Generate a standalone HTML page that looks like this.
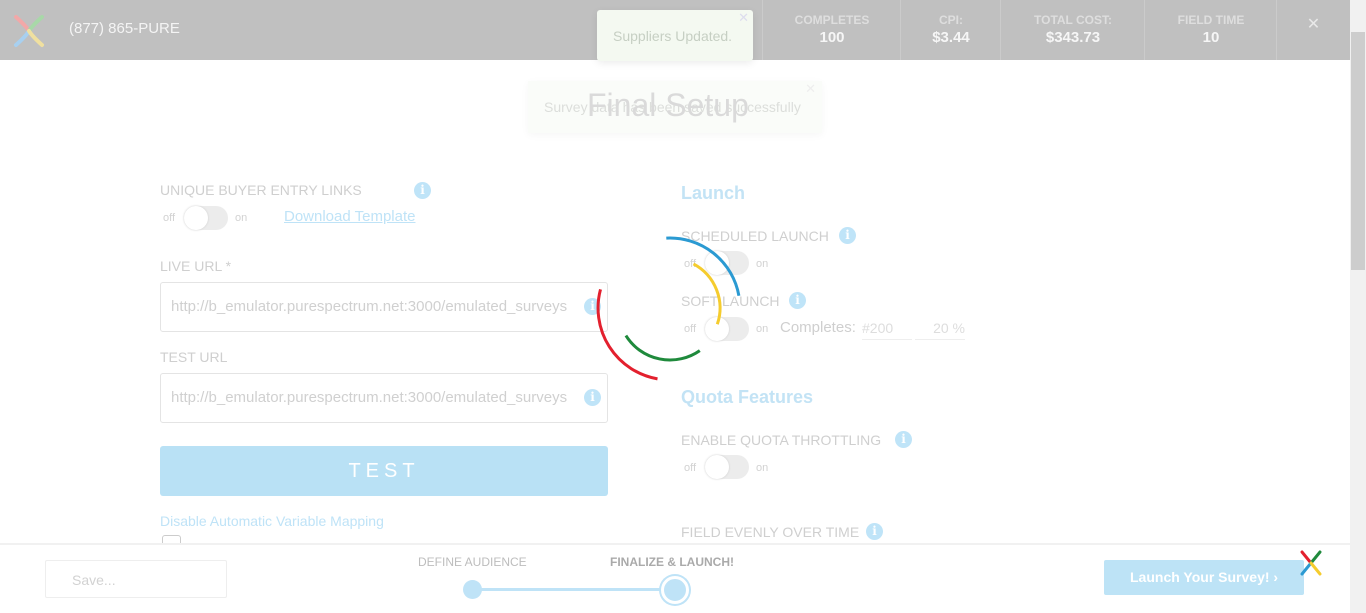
<!DOCTYPE html>
<html><head><meta charset="utf-8">
<style>
*{box-sizing:border-box;margin:0;padding:0}
body{width:1366px;height:613px;overflow:hidden;background:#fff;font-family:"Liberation Sans",sans-serif;position:relative;color:#ccc}
.abs{position:absolute}
.hdr{left:0;top:0;width:1350px;height:60px;background:#c0c0c0}
.phone{left:69px;top:20px;color:#f4f4f4;font-size:15px}
.stat{top:0;height:60px;border-left:1px solid #cbcbcb;text-align:center;color:#e6e6e6;font-weight:bold}
.stat .l{font-size:12px;margin-top:13px;color:#dedede}
.stat .v{font-size:15px;color:#f6f6f6;margin-top:2px}
.lab{font-size:14px;color:#cfcfcf}
.info{width:17px;height:17px;border-radius:50%;background:#bfe4f8;color:#fff;font-size:12px;font-weight:bold;text-align:center;line-height:17px;font-family:"DejaVu Serif",serif}
.tog{width:44px;height:24px;border-radius:12px;background:#ececec}
.tog::after{content:"";position:absolute;left:0;top:0;width:24px;height:24px;border-radius:50%;background:#fff;box-shadow:0 0 2px #ccc}
.sm{font-size:11px;color:#d2d2d2}
.inp{border:1px solid #e4e4e4;border-radius:3px;height:50px;width:448px;font-size:15px;color:#d0d0d0;padding:15px 10px}
.blue{color:#bfe3f7}
.h2{font-size:18px;font-weight:bold;color:#c3e3f5}
</style></head><body>
<div class="abs hdr"></div>
<svg class="abs" style="left:12px;top:14px" width="34" height="34" viewBox="0 0 34 34">
<path d="M4 3 Q14 12 17 17" stroke="#f2a8a8" stroke-width="4" fill="none" stroke-linecap="round"/>
<path d="M30 3 Q20 12 17 17" stroke="#a8d8a8" stroke-width="4" fill="none" stroke-linecap="round"/>
<path d="M4 31 Q14 22 17 17" stroke="#a8d0f0" stroke-width="4" fill="none" stroke-linecap="round"/>
<path d="M30 31 Q20 22 17 17" stroke="#f0e0a0" stroke-width="4" fill="none" stroke-linecap="round"/>
</svg>
<div class="abs phone">(877) 865-PURE</div>
<div class="abs stat" style="left:762px;width:139px"><div class="l">COMPLETES</div><div class="v">100</div></div>
<div class="abs stat" style="left:900px;width:101px"><div class="l">CPI:</div><div class="v">$3.44</div></div>
<div class="abs stat" style="left:1000px;width:145px"><div class="l">TOTAL COST:</div><div class="v">$343.73</div></div>
<div class="abs stat" style="left:1144px;width:133px"><div class="l">FIELD TIME</div><div class="v">10</div></div>
<div class="abs stat" style="left:1276px;width:74px;font-size:16px;padding-top:14px;font-weight:normal;color:#e8e8e8">✕</div>
<div class="abs" style="left:1350px;top:0;width:16px;height:613px;background:#f1f1f1"></div>
<div class="abs" style="left:1351px;top:32px;width:14px;height:238px;background:#cdcdcd"></div>

<div class="abs" style="left:597px;top:10px;width:156px;height:51px;background:#f4f9f1;border-radius:3px;box-shadow:0 2px 8px rgba(0,0,0,.08);color:#c6cfc3;font-size:14px;padding:18px 0 0 16px">Suppliers Updated.<span class="abs" style="right:4px;top:0;font-size:13px;color:#dde">✕</span></div>
<div class="abs" style="left:528px;top:81px;width:294px;height:52px;background:#fafcf9;box-shadow:0 2px 8px rgba(0,0,0,.04);color:#dcdedb;font-size:14px;padding:18px 0 0 16px">Survey data has been saved successfully<span class="abs" style="right:6px;top:0;font-size:13px;color:#eee">✕</span></div>
<div class="abs" style="left:587px;top:87px;font-size:32px;color:#dadada;font-weight:300">Final Setup</div>

<div class="abs lab" style="left:160px;top:182px">UNIQUE BUYER ENTRY LINKS</div>
<div class="abs info" style="left:414px;top:182px">i</div>
<div class="abs sm" style="left:163px;top:212px">off</div>
<div class="abs tog" style="left:184px;top:206px"></div>
<div class="abs sm" style="left:235px;top:212px">on</div>
<div class="abs blue" style="left:284px;top:208px;font-size:15px;text-decoration:underline">Download Template</div>
<div class="abs lab" style="left:160px;top:258px">LIVE URL *</div>
<div class="abs inp" style="left:160px;top:282px">http://b_emulator.purespectrum.net:3000/emulated_surveys</div>
<div class="abs info" style="left:584px;top:298px">i</div>
<div class="abs lab" style="left:160px;top:349px">TEST URL</div>
<div class="abs inp" style="left:160px;top:373px">http://b_emulator.purespectrum.net:3000/emulated_surveys</div>
<div class="abs info" style="left:584px;top:389px">i</div>
<div class="abs" style="left:160px;top:446px;width:448px;height:50px;background:#b9e1f5;border-radius:3px;color:#fff;font-size:20px;letter-spacing:5px;text-align:center;line-height:50px">TEST</div>
<div class="abs blue" style="left:160px;top:513px;font-size:14px">Disable Automatic Variable Mapping</div>
<div class="abs" style="left:162px;top:535px;width:19px;height:12px;border:1px solid #ccc;border-bottom:none;border-radius:3px 3px 0 0"></div>

<div class="abs h2" style="left:681px;top:183px">Launch</div>
<div class="abs lab" style="left:681px;top:228px">SCHEDULED LAUNCH</div>
<div class="abs info" style="left:839px;top:227px">i</div>
<div class="abs sm" style="left:684px;top:258px">off</div>
<div class="abs tog" style="left:705px;top:251px"></div>
<div class="abs sm" style="left:756px;top:258px">on</div>
<div class="abs lab" style="left:681px;top:293px">SOFT LAUNCH</div>
<div class="abs info" style="left:789px;top:292px">i</div>
<div class="abs sm" style="left:684px;top:323px">off</div>
<div class="abs tog" style="left:705px;top:317px"></div>
<div class="abs sm" style="left:756px;top:323px">on</div>
<div class="abs" style="left:780px;top:319px;font-size:15px;color:#cfcfcf">Completes:</div>
<div class="abs" style="left:862px;top:320px;width:50px;border-bottom:1px solid #eee;font-size:14px;color:#ddd;padding-bottom:3px">#200</div>
<div class="abs" style="left:915px;top:320px;width:50px;border-bottom:1px solid #eee;font-size:14px;color:#ddd;text-align:right;padding-bottom:3px">20 %</div>
<div class="abs h2" style="left:681px;top:387px">Quota Features</div>
<div class="abs lab" style="left:681px;top:432px">ENABLE QUOTA THROTTLING</div>
<div class="abs info" style="left:895px;top:431px">i</div>
<div class="abs sm" style="left:684px;top:462px">off</div>
<div class="abs tog" style="left:705px;top:455px"></div>
<div class="abs sm" style="left:756px;top:462px">on</div>
<div class="abs lab" style="left:681px;top:524px">FIELD EVENLY OVER TIME</div>
<div class="abs info" style="left:866px;top:523px">i</div>

<svg class="abs" style="left:0;top:0" width="1366" height="613">
<path d="M666.3 238.1 A70 70 0 0 1 738.9 295.8" stroke="#2b9ad2" stroke-width="3" fill="none"/>
<path d="M657.5 378.9 A72 72 0 0 1 600.5 289.4" stroke="#e3202e" stroke-width="3" fill="none"/>
<path d="M693.5 263.9 A50 50 0 0 1 717.3 324.3" stroke="#f5cc2e" stroke-width="3" fill="none"/>
<path d="M699.8 350.6 A52 52 0 0 1 625.9 335.6" stroke="#1f8a3c" stroke-width="3" fill="none"/>
</svg>

<div class="abs" style="left:0;top:543px;width:1350px;height:70px;background:#fff;border-top:2px solid #f1f1f1"></div>
<div class="abs" style="left:45px;top:560px;width:182px;height:38px;border:1px solid #eee;border-radius:2px;font-size:14px;color:#d2d2d2;padding:11px 0 0 26px">Save...</div>
<div class="abs" style="left:418px;top:555px;font-size:12px;color:#bdbdbd">DEFINE AUDIENCE</div>
<div class="abs" style="left:610px;top:555px;font-size:12px;color:#aaa;font-weight:bold">FINALIZE &amp; LAUNCH!</div>
<div class="abs" style="left:480px;top:588px;width:190px;height:3px;background:#bfe3f7"></div>
<div class="abs" style="left:463px;top:580px;width:19px;height:19px;border-radius:50%;background:#bfe3f7"></div>
<div class="abs" style="left:661px;top:576px;width:28px;height:28px;border-radius:50%;background:#bfe3f7;border:3px solid #fff;box-shadow:0 0 0 2px #bfe3f7"></div>
<div class="abs" style="left:1104px;top:560px;width:200px;height:35px;background:#bde3f6;border-radius:2px;color:#fff;font-size:14px;font-weight:bold;padding:9px 0 0 26px">Launch Your Survey! ›</div>
<svg class="abs" style="left:1297px;top:549px" width="28" height="28" viewBox="0 0 28 28">
<path d="M5 3 L14 14" stroke="#e3202e" stroke-width="3" stroke-linecap="round"/>
<path d="M23 3 L14 14" stroke="#1f8a3c" stroke-width="3" stroke-linecap="round"/>
<path d="M5 25 L14 14" stroke="#2b9ad2" stroke-width="3" stroke-linecap="round"/>
<path d="M23 25 L14 14" stroke="#f5cc2e" stroke-width="3" stroke-linecap="round"/>
</svg>
</body></html>
